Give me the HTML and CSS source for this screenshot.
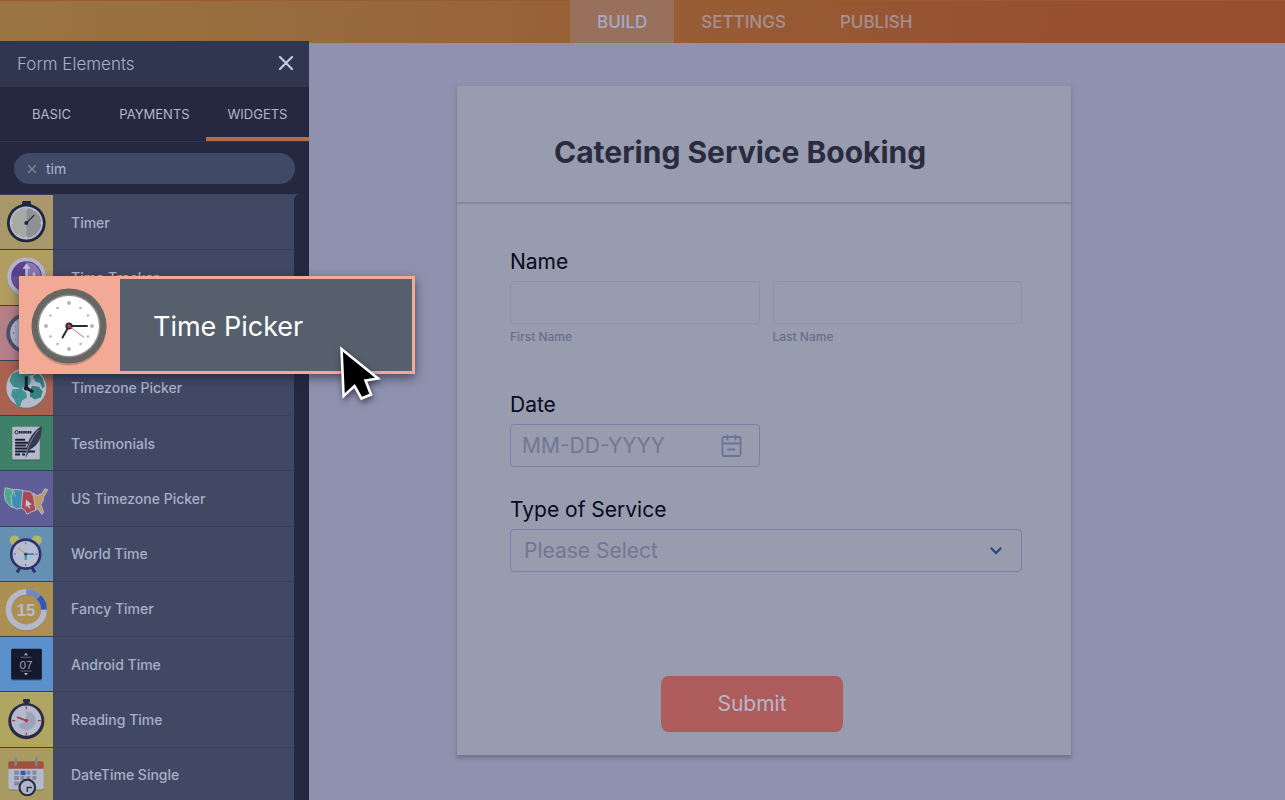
FILE: index.html
```
<!DOCTYPE html>
<html lang="en">
<head>
	<meta charset="utf-8">
	<meta name="viewport" content="width=device-width, initial-scale=1">
	<title>Catering Service Booking</title>
	<link rel="stylesheet" href="styles.css">
</head>
<body>

<header class="topbar">
	<nav class="topnav">
		<a href="#build" class="active">BUILD</a>
		<a href="#settings">SETTINGS</a>
		<a href="#publish">PUBLISH</a>
	</nav>
</header>

<div class="workspace">

	<!-- FORM ELEMENTS PANEL -->
	<aside class="panel">
		<div class="panel-head">
			<h2>Form Elements</h2>
			<button type="button" class="close" aria-label="Close">
				<svg width="16" height="16" viewBox="0 0 16 16"><path d="M2 1L14 13M14 1L2 13" stroke="#c3c9df" stroke-width="2.2" stroke-linecap="round"/></svg>
			</button>
		</div>
		<div class="tabs">
			<button type="button">BASIC</button>
			<button type="button">PAYMENTS</button>
			<button type="button" class="active">WIDGETS</button>
		</div>
		<div class="search">
			<div class="search-box">
				<button type="button" aria-label="Clear search">
					<svg width="10" height="10" viewBox="0 0 10 10"><path d="M1 1L9 9M9 1L1 9" stroke="#7e86a3" stroke-width="1.3"/></svg>
				</button>
				<input type="text" value="tim" aria-label="Search widgets">
			</div>
		</div>
		<div class="results">
			<ul class="widgets">
				<li>
					<svg class="icon timer" viewBox="0 0 53 55">
						<rect x="22" y="6" width="9" height="5" rx="1" fill="#1f2640"/>
						<circle cx="26.3" cy="28.4" r="19.6" fill="#1f2640"/>
						<circle cx="26.3" cy="28.4" r="16.8" fill="#b4b9cc"/>
						<path d="M26.3 13.4a15 15 0 0 0 0 30z" fill="#a8a8a4"/>
						<path d="M26.3 13.4a15 15 0 0 1 0 30z" fill="#8e9093"/>
						<path d="M26.3 12v3M26.3 42v3M10 28.4h3M40 28.4h3M18 14.5l1.5 2M34.5 14.5l-1.5 2M18 42.5l1.5 -2M34.5 42.5l-1.5 -2" stroke="#c3c8d8" stroke-width="1"/>
						<path d="M26.3 28.4l8 -8" stroke="#1f2640" stroke-width="1.3"/>
						<circle cx="26.3" cy="28.4" r="2" fill="#1f2640"/>
					</svg>
					<span>Timer</span>
				</li>
				<li>
					<svg class="icon tracker" viewBox="0 0 53 55">
						<circle cx="26.5" cy="27.5" r="20" fill="#9294ae"/>
						<circle cx="26.5" cy="27" r="19.5" fill="#b3b4cb"/>
						<circle cx="26.5" cy="27" r="15.5" fill="#594190"/>
						<path d="M26.5 27V12.5a14.5 14.5 0 0 1 14.5 14.5z" fill="#8b75b0"/>
						<path d="M26.5 27h14.5a14.5 14.5 0 0 1 -29 0z" fill="#6c529e"/>
						<path d="M26.5 30V17M34 30V23" stroke="#c0c0d8" stroke-width="2.5"/>
						<path d="M22.5 19l4 -5.5l4 5.5z" fill="#c0c0d8"/>
					</svg>
					<span>Time Tracker</span>
				</li>
				<li>
					<svg class="icon picker" viewBox="0 0 53 55">
						<circle cx="26.5" cy="27.5" r="20.5" fill="#4b5167"/>
						<circle cx="26.5" cy="27.5" r="16.5" fill="#b1b6cb"/>
						<path d="M26.5 27.5h10M26.5 27.5l-4 6" stroke="#2b2e44" stroke-width="1.5"/>
						<circle cx="13.5" cy="27.5" r="1" fill="#7d8298"/>
						<circle cx="15.5" cy="21" r=".7" fill="#7d8298"/>
						<circle cx="15.5" cy="34" r=".7" fill="#7d8298"/>
					</svg>
					<span>Time Picker</span>
				</li>
				<li>
					<svg class="icon zone" viewBox="0 0 53 55">
						<circle cx="26.3" cy="28" r="20.5" fill="#7a6471"/>
						<circle cx="26.3" cy="27" r="20.3" fill="#b3bacb"/>
						<path d="M20 9.5l7 -1.5l8 2l-1 4l-5 1l2 4l-1 5l-5 1l-4 4l-3 -2l-5 -1l-4 -6l3 -7z" fill="#408b8b"/>
						<path d="M12 29l9 -1l5 4l1 5l-5 3l-2 6l-3 0l-3 -7l-3 -4z" fill="#409294"/>
						<path d="M38 12l5 6l2 7l-2 3l-3 -6l-4 -1l-3 -5z" fill="#37827f"/>
						<path d="M32 25l7 1l4 5l-2 6l-6 2l-5 -3l0 -6z" fill="#37827f"/>
						<path d="M26.3 9v19" stroke="#46a09e" stroke-width="3" opacity=".6"/>
						<path d="M26.3 15.5V27.5l7 4" stroke="#171c32" stroke-width="3" fill="none"/>
						<circle cx="26.3" cy="27.5" r="2.5" fill="#171c32"/>
					</svg>
					<span>Timezone Picker</span>
				</li>
				<li>
					<svg class="icon quote" viewBox="0 0 53 55">
						<rect x="12" y="12" width="28" height="33" rx="1" fill="#315e58"/>
						<rect x="12" y="11" width="28" height="33" rx="1" fill="#b4bacb"/>
						<circle cx="16.5" cy="16.5" r="1.7" fill="none" stroke="#1a2034" stroke-width="1"/>
						<path d="M19 16.5h13" stroke="#1a2034" stroke-width="2.4" stroke-dasharray="1.6 .5"/>
						<path d="M15 24h10M15 27h13M15 30h11M15 33h14M15 36h20M15 39h5M22 39h3" stroke="#1a2034" stroke-width="2"/>
						<path d="M26 42c0 -14 4 -24 16 -32c0 12 -3 20 -12 24z" fill="#353b51"/>
						<path d="M25 43C27 32 33 20 39 14" stroke="#9299af" stroke-width=".8" fill="none"/>
					</svg>
					<span>Testimonials</span>
				</li>
				<li>
					<svg class="icon states" viewBox="0 0 53 55">
						<g stroke="#b7b4cc" stroke-width="1" stroke-linejoin="round">
							<path d="M5 17l9 2l-1 6l1 12l-4 -1l-5 -6l-1 -7z" fill="#4ba98b"/>
							<path d="M14 18.5l9 1l-1 18l-6 1l-4 -3l-1 -9z" fill="#408db1"/>
							<path d="M23 20l8 1l3 5l2 14l-4 1l-5 3l-2 -4l-4 -3z" fill="#aa4856"/>
							<path d="M33 22l4 3l5 -2l3 -5l3 1l-4 7l-1 5l-2 3l3 8l-2 2l-4 -6l-2 1z" fill="#b99c64"/>
						</g>
						<path d="M10 20l4 1l1 5" stroke="#86c3a7" fill="none"/>
						<path d="M26 29l6 5l-3 .5l1.5 3l-1.5 .5l-1.5 -3l-2 2z" fill="#c6c7d8"/>
					</svg>
					<span>US Timezone Picker</span>
				</li>
				<li>
					<svg class="icon world" viewBox="0 0 53 55">
						<path d="M20 41l-3 5M32 41l3 5" stroke="#30306e" stroke-width="3"/>
						<circle cx="14.5" cy="13.5" r="5" fill="#b3b566"/>
						<circle cx="37" cy="13.5" r="5" fill="#b3b566"/>
						<circle cx="25.7" cy="27.5" r="16" fill="#30306e"/>
						<circle cx="25.7" cy="27.5" r="13.3" fill="#b6bccf"/>
						<path d="M25.7 15.5v2M25.7 37.5v2M13.7 27.5h2M35.7 27.5h2" stroke="#555b78" stroke-width="1"/>
						<path d="M25.7 27.5L18 21" stroke="#b5ab69" stroke-width="1.5"/>
						<path d="M25.7 33.5V27.5H34" stroke="#3586ba" stroke-width="2" fill="none"/>
						<circle cx="25.7" cy="27.5" r="1.5" fill="#28396d"/>
					</svg>
					<span>World Time</span>
				</li>
				<li>
					<svg class="icon fancy" viewBox="0 0 53 55">
						<circle cx="26.3" cy="28.5" r="18" fill="none" stroke="#8a794f" stroke-width="6"/>
						<circle cx="26.3" cy="28" r="18" fill="none" stroke="#b5b8cb" stroke-width="6"/>
						<path d="M26.3 10a18 18 0 0 1 12.7 5.3" fill="none" stroke="#7187bd" stroke-width="6"/>
						<path d="M39 15.3a18 18 0 0 1 5.3 12.7" fill="none" stroke="#3158b7" stroke-width="6"/>
						<text x="26" y="34.5" class="digits">15</text>
					</svg>
					<span>Fancy Timer</span>
				</li>
				<li>
					<svg class="icon android" viewBox="0 0 53 55">
						<rect x="11" y="13" width="31" height="31" rx="1.5" fill="#3e638e"/>
						<rect x="11" y="12" width="31" height="31" rx="1.5" fill="#15192d"/>
						<path d="M20.5 20.5h11M20.5 34.5h11" stroke="#777d96" stroke-width=".8"/>
						<path d="M24 18.5l2 -2.500l2 2.500zM24 36.5l2 2.500l2 -2.500z" fill="#b4bace"/>
						<text x="26" y="32" class="thin">07</text>
					</svg>
					<span>Android Time</span>
				</li>
				<li>
					<svg class="icon reading" viewBox="0 0 53 55">
						<rect x="23" y="7" width="7" height="4" rx="1" fill="#272c44"/>
						<rect x="24.5" y="9" width="4" height="4" fill="#272c44"/>
						<circle cx="26.3" cy="29.5" r="18.3" fill="#272c44"/>
						<circle cx="26.3" cy="29" r="15.3" fill="#b4b9cc"/>
						<path d="M26.3 29V19.5a9.5 9.5 0 1 1 -8 14.5z" fill="#9da2b6"/>
						<path d="M26.3 14.5v3M26.3 41v3M12 29h3M38 29h3" stroke="#a83d52" stroke-width="1.2"/>
						<path d="M26.3 29l-9.5 -3.5" stroke="#a83d52" stroke-width="2"/>
						<circle cx="26.3" cy="29" r="1.8" fill="#a83d52"/>
					</svg>
					<span>Reading Time</span>
				</li>
				<li>
					<svg class="icon datetime" viewBox="0 0 53 55">
						<rect x="8" y="15" width="36" height="28" rx="2" fill="#807a5f"/>
						<rect x="8" y="14" width="36" height="28" rx="2" fill="#b4b9cc"/>
						<path d="M8 21v-5.5q0 -2 2 -2h32q2 0 2 2V21z" fill="#a1523b"/>
						<path d="M14 23h5v4h-5zM26.5 23h4v4h-4zM32.5 23h4v4h-4zM14 28.5h5v4h-5zM20.5 28.5h4v4h-4zM26.5 28.5h4v4h-4zM32.5 28.5h4v4h-4zM14 34h5v4h-5z" fill="#83889d"/>
						<rect x="20.5" y="23" width="5" height="4.5" fill="#3659af"/>
						<path d="M15.5 11v6M36.5 11v6" stroke="#7f879b" stroke-width="2.5" stroke-linecap="round"/>
						<circle cx="27.3" cy="40" r="9" fill="#292e45"/>
						<circle cx="27.3" cy="40" r="6.8" fill="#afb4c7"/>
						<path d="M32 40h-4.7v4.5" stroke="#292e45" stroke-width="1.4" fill="none"/>
					</svg>
					<span>DateTime Single</span>
				</li>
			</ul>
			<div class="track"></div>
		</div>
	</aside>

	<!-- FORM -->
	<main class="canvas">
		<form class="form">
			<div class="form-head">
				<h1>Catering Service Booking</h1>
			</div>
			<div class="form-body">
				<fieldset class="field">
					<legend>Name</legend>
					<div class="pair">
						<div>
							<input type="text" id="first" class="box pale">
							<label for="first" class="sub">First Name</label>
						</div>
						<div>
							<input type="text" id="last" class="box pale">
							<label for="last" class="sub">Last Name</label>
						</div>
					</div>
				</fieldset>
				<div class="field date">
					<label for="date">Date</label>
					<div class="pair">
						<div class="box with-icon">
							<input type="text" id="date" placeholder="MM-DD-YYYY">
							<svg width="22" height="24" viewBox="0 0 22 24" fill="none" stroke="#6c7598" stroke-width="1.8" stroke-linecap="round">
								<rect x="1.5" y="3" width="18" height="19" rx="1.5"/>
								<path d="M1.5 9.5h18M6.5 1.5v4M14.5 1.5v4M7 15.5h6.5"/>
							</svg>
						</div>
					</div>
				</div>
				<div class="field service">
					<label for="service">Type of Service</label>
					<div class="select">
						<select id="service" class="box">
							<option>Please Select</option>
						</select>
						<svg width="14" height="10" viewBox="0 0 14 10"><path d="M2.5 2.5L7 7L11.5 2.5" fill="none" stroke="#2c437d" stroke-width="2.2" stroke-linecap="round"/></svg>
					</div>
				</div>
				<button type="submit" class="submit">Submit</button>
			</div>
		</form>
	</main>
</div>

<!-- WIDGET BEING DRAGGED -->
<div class="dragged">
	<svg class="clock" viewBox="0 0 98 92">
		<circle cx="47" cy="49" r="37.5" fill="#c78b7c"/>
		<circle cx="47" cy="47" r="37.5" fill="#666662"/>
		<circle cx="47" cy="47" r="31.5" fill="#8f8f8d"/>
		<circle cx="47" cy="47" r="30" fill="#fff"/>
		<g fill="#b5b5b8">
			<circle cx="47" cy="24" r="2"/>
			<circle cx="70" cy="47" r="2"/>
			<circle cx="47" cy="70" r="2"/>
			<circle cx="24" cy="47" r="2"/>
			<circle cx="58.5" cy="29" r="1.3"/>
			<circle cx="66" cy="36.5" r="1.3"/>
			<circle cx="66" cy="57.5" r="1.3"/>
			<circle cx="58.5" cy="65" r="1.3"/>
			<circle cx="35.5" cy="65" r="1.3"/>
			<circle cx="28.5" cy="57.5" r="1.3"/>
			<circle cx="28.5" cy="36.5" r="1.3"/>
			<circle cx="35.5" cy="29" r="1.3"/>
		</g>
		<path d="M47 47H65M47 47L40.5 58.5" stroke="#2b2b2f" stroke-width="2" stroke-linecap="round"/>
		<circle cx="47" cy="47" r="3.6" fill="#2b2b2f"/>
		<path d="M47 47L62 58.5" stroke="#e36a70" stroke-width="1"/>
		<circle cx="47" cy="47" r="1.7" fill="#d6404a"/>
	</svg>
	<span>Time Picker</span>
	<svg class="cursor" width="52" height="64" viewBox="0 0 52 64">
		<path d="M4.5 6L6.6 53L17.5 43L24.5 55.5L34 51.5L28.5 37.5L41 35.500z" fill="#000" stroke="#fff" stroke-width="2.6"/>
	</svg>
</div>

</body>
</html>
```

FILE: styles.css
```
* {
	box-sizing: border-box;
}
body {
	margin: 0;
	height: 100vh;
	overflow: hidden;
	display: flex;
	flex-direction: column;
	background: #8f92ae;
	font-family: Inter, "Liberation Sans", sans-serif;
	color: #080a1e;
}
h1, h2, ul, fieldset, legend {
	margin: 0;
	padding: 0;
	border: 0;
}
button, input, select {
	font-family: inherit;
	border: 0;
	padding: 0;
	background: none;
	outline: none;
}

/* top bar */
.topbar {
	flex: none;
	height: 43px;
	padding-left: 570px;
	background: linear-gradient(100deg, #9a7541 0%, #986b3e 24%, #985f36 48%, #965131 80%, #964e2e 100%);
	box-shadow: inset 0 1px #9a5c2c;
}
.topnav {
	display: flex;
	height: 100%;
}
.topnav a {
	display: flex;
	align-items: center;
	padding: 0 27px;
	font-size: 17px;
	font-weight: 500;
	color: #a68f90;
	text-decoration: none;
}
.topnav a.active {
	background: #98705b;
	color: #a5aac8;
}

.workspace {
	flex: 1;
	display: flex;
	min-height: 0;
}

/* left panel */
.panel {
	flex: none;
	width: 309px;
	margin-top: -2px;
	display: flex;
	flex-direction: column;
	background: #25283f;
}
.panel-head {
	flex: none;
	height: 46px;
	padding: 0 14px 0 17px;
	display: flex;
	align-items: center;
	justify-content: space-between;
	background: #30364f;
}
.panel-head h2 {
	font-size: 17px;
	font-weight: 300;
	color: #a9afc9;
}
.close {
	width: 18px;
	height: 18px;
	display: grid;
	place-items: center;
}
.tabs {
	flex: none;
	height: 55px;
	display: flex;
	border-bottom: 1px solid #30364f;
}
.tabs button {
	flex: 1;
	font-size: 13px;
	color: #b1b7cd;
	border-top: 4px solid transparent;
	border-bottom: 4px solid transparent;
}
.tabs button.active {
	border-bottom-color: #b46c48;
}
.search {
	padding: 11px 14px 10px;
}
.search-box {
	height: 31px;
	padding: 0 13px;
	display: flex;
	align-items: center;
	gap: 9px;
	border-radius: 16px;
	background: #404966;
}
.search-box button {
	display: flex;
}
.search-box input {
	flex: 1;
	min-width: 0;
	font-size: 14px;
	color: #b1b7cd;
}
.results {
	flex: 1;
	min-height: 0;
	display: flex;
	margin-bottom: -2px;
	background: #404864;
}
.widgets {
	flex: 1;
	display: flex;
	flex-direction: column;
	list-style: none;
}
.widgets li {
	flex: 1;
	min-height: 0;
	display: flex;
	align-items: center;
	gap: 18px;
	border-top: 1px solid #383f5a;
	font-size: 14px;
	font-weight: 500;
	color: #a9afc7;
}
.track {
	width: 15px;
	border-top-left-radius: 6px;
	background: #25283f;
}
.icon {
	width: 53px;
	height: 100%;
}
.timer { background: #a99869; }
.tracker { background: #b09d5f; }
.picker { background: #b37f89; }
.zone { background: #a8624f; }
.quote { background: #3f8069; }
.states { background: #605e99; }
.world { background: #6590b1; }
.fancy { background: #ab9051; }
.android { background: #5a90cb; }
.reading { background: #b0a561; }
.datetime { background: #a89b62; }
.digits {
	font: bold 17px "Liberation Sans", sans-serif;
	text-anchor: middle;
	fill: #b7bbce;
}
.thin {
	font: 12px "Liberation Sans", sans-serif;
	text-anchor: middle;
	fill: #9da3ba;
}

/* form */
.canvas {
	flex: 1;
	min-width: 0;
	padding: 43px 214px 45px 148px;
}
.form {
	background: #979cae;
	box-shadow: 0 3px 3px #73768f, 0 2px 6px #7f829d;
}
.form-head {
	padding: 43px 97px 26px;
	border-bottom: 2px solid #868ba4;
}
.form-head h1 {
	font-size: 30px;
	line-height: 47px;
	font-weight: 700;
	color: #2b2b40;
	white-space: nowrap;
}
.form-body {
	padding: 42px 49px 23px 53px;
}
.field > legend,
.field > label {
	display: block;
	margin-bottom: 3px;
	font-size: 21px;
	line-height: 32px;
}
.date {
	margin-top: 44px;
}
.service {
	margin-top: 27px;
}
.pair {
	display: grid;
	grid-template-columns: repeat(2, minmax(0, 1fr));
	gap: 13px;
}
.box {
	display: block;
	width: 100%;
	height: 43px;
	border: 1px solid #7a80aa;
	border-radius: 4px;
	font-size: 21px;
	color: #727892;
}
.pale {
	border-color: #8d92a8;
}
.sub {
	display: block;
	margin-top: 5px;
	font-size: 12px;
	line-height: 16px;
	font-weight: 500;
	color: #686f8f;
}
.with-icon {
	display: flex;
	align-items: center;
	padding: 0 16px 0 11px;
}
.with-icon input {
	flex: 1;
	min-width: 0;
	font-size: 21px;
	color: #727892;
}
.with-icon input::placeholder {
	color: #727892;
}
.select {
	position: relative;
}
.select select {
	appearance: none;
	padding: 0 13px;
}
.select svg {
	position: absolute;
	right: 19px;
	top: 17px;
	pointer-events: none;
}
.submit {
	display: block;
	width: 182px;
	height: 56px;
	margin: 104px 0 0 151px;
	padding-bottom: 2px;
	border-radius: 8px;
	background: #ae5b5c;
	font-size: 21px;
	color: #b9b6cb;
}

/* dragged widget floats over the panel and the form */
.dragged {
	position: absolute;
	left: 19px;
	top: 276px;
	width: 396px;
	height: 98px;
	display: flex;
	border: 3px solid #f2a996;
	background: #56606d;
	box-shadow: 0 4px 10px rgba(25, 28, 50, .6);
}
.clock {
	width: 98px;
	background: #f2a996;
}
.dragged span {
	padding: 2px 0 0 33px;
	align-self: center;
	font-size: 27px;
	color: #fff;
}
.cursor {
	position: absolute;
	left: 315px;
	top: 64px;
	filter: drop-shadow(1px 3px 3px rgba(20, 22, 40, .6));
}
```
